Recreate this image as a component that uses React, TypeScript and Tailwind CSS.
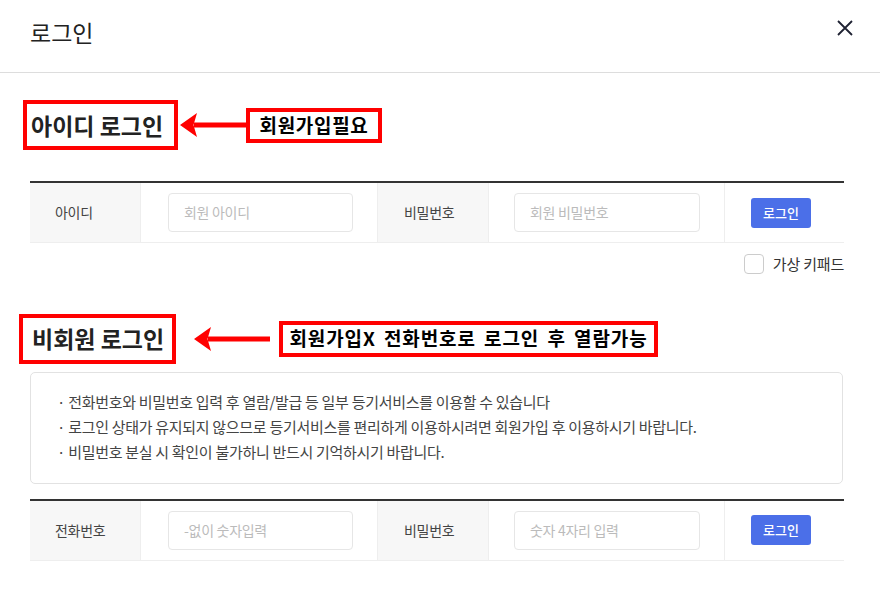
import React from 'react';

const FONT = "font-['Noto_Sans_CJK_KR','Noto_Sans',sans-serif]";

function Arrow({ width }: { width: number }) {
    return (
        <svg width={width} height={26} viewBox={`0 0 ${width} 26`}>
            <rect x={14} y={10.5} width={width - 14} height={5} fill="#ff0000" />
            <path d="M0 13 L17 1 L13.5 13 L17 25 Z" fill="#ff0000" />
        </svg>
    );
}

function LoginRow({
    label1,
    placeholder1,
    label2,
    placeholder2,
}: {
    label1: string;
    placeholder1: string;
    label2: string;
    placeholder2: string;
}) {
    return (
        <div className="ml-[30px] w-[814px] border-t-2 border-[#333] grid grid-cols-[110px_237px_111px_236px_120px] h-[62px] border-b border-b-[#eee]">
            <div className="bg-[#f7f7f7] flex items-center pl-[25px] text-[14px] tracking-[-0.3px] text-[#444]">{label1}</div>
            <div className="border-l border-[#eee] flex items-center pl-[27px]">
                <div className="w-[185px] h-[39px] border border-[#e6e6e6] rounded-[4px] flex items-center pl-[15px] text-[14px] tracking-[-0.3px] text-[#bbb]">
                    {placeholder1}
                </div>
            </div>
            <div className="bg-[#f7f7f7] border-l border-[#eee] flex items-center pl-[26px] text-[14px] tracking-[-0.3px] text-[#444]">{label2}</div>
            <div className="border-l border-[#eee] flex items-center pl-[25px]">
                <div className="w-[186px] h-[39px] border border-[#e6e6e6] rounded-[4px] flex items-center pl-[15px] text-[14px] tracking-[-0.3px] text-[#bbb]">
                    {placeholder2}
                </div>
            </div>
            <div className="border-l border-[#eee] flex items-center pl-[26px]">
                <button className="w-[60px] h-[30px] rounded-[3px] bg-[#4b6fe8] text-white text-[13px] font-medium">로그인</button>
            </div>
        </div>
    );
}

export default function App() {
    return (
        <div className={`w-[880px] h-[616px] bg-white overflow-hidden ${FONT}`}>
            {/* header */}
            <header className="h-[73px] border-b border-[#ddd] flex items-start justify-between pl-[30px] pr-[27px]">
                <h1 className="mt-[17px] text-[23px] leading-[30px] text-[#222]">로그인</h1>
                <svg className="mt-[20px]" width="16" height="16" viewBox="0 0 16 16">
                    <path d="M1 1 L15 15 M15 1 L1 15" stroke="#1f2233" strokeWidth="1.8" fill="none" />
                </svg>
            </header>

            {/* 아이디 로그인 */}
            <div className="mt-[27px] pl-[23px] flex items-center">
                <div className="w-[155px] h-[50px] border-4 border-[#ff0000] flex items-center pl-[4px] text-[23px] font-bold text-[#222]">
                    아이디 로그인
                </div>
                <div className="ml-[2px]">
                    <Arrow width={66} />
                </div>
                <div className="w-[136px] h-[35px] border-4 border-[#ff0000] flex items-center justify-center text-[19px] font-bold tracking-[0.7px] text-black">
                    회원가입필요
                </div>
            </div>

            <div className="mt-[31px]">
                <LoginRow label1="아이디" placeholder1="회원 아이디" label2="비밀번호" placeholder2="회원 비밀번호" />
            </div>

            <div className="w-[844px] mt-[10px] flex items-center justify-end gap-[9px]">
                <span className="w-[20px] h-[20px] border border-[#ccc] rounded-[4px] bg-white" />
                <span className="text-[15px] tracking-[-0.2px] text-[#333]">가상 키패드</span>
            </div>

            {/* 비회원 로그인 */}
            <div className="mt-[38px] pl-[19px] flex items-center">
                <div className="w-[157px] h-[50px] border-4 border-[#ff0000] flex items-center pl-[9px] text-[23px] font-bold text-[#222]">
                    비회원 로그인
                </div>
                <div className="ml-[18px]">
                    <Arrow width={76} />
                </div>
                <div className="ml-[9px] w-[379px] h-[36px] border-4 border-[#ff0000] flex items-center justify-center text-[19px] font-bold tracking-[0.9px] [word-spacing:3px] text-black">
                    회원가입X 전화번호로 로그인 후 열람가능
                </div>
            </div>

            <div className="mt-[8px] ml-[30px] w-[813px] h-[112px] border border-[#e2e2e2] rounded-[5px] pt-[16px] pl-[26px] text-[15px] leading-[25px] tracking-[-0.3px] text-[#444]">
                <p>· 전화번호와 비밀번호 입력 후 열람/발급 등 일부 등기서비스를 이용할 수 있습니다</p>
                <p>· 로그인 상태가 유지되지 않으므로 등기서비스를 편리하게 이용하시려면 회원가입 후 이용하시기 바랍니다.</p>
                <p>· 비밀번호 분실 시 확인이 불가하니 반드시 기억하시기 바랍니다.</p>
            </div>

            <div className="mt-[15px]">
                <LoginRow label1="전화번호" placeholder1="-없이 숫자입력" label2="비밀번호" placeholder2="숫자 4자리 입력" />
            </div>
        </div>
    );
}
